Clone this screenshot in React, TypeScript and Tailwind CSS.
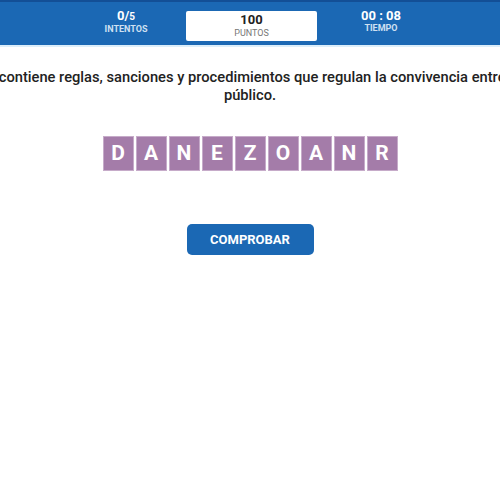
const letters = ['D', 'A', 'N', 'E', 'Z', 'O', 'A', 'N', 'R'];

function Stat({ value, label, className = '' }: { value: React.ReactNode; label: string; className?: string }) {
  return (
    <div className={`flex flex-col items-center pt-[6px] ${className}`}>
      <span className="text-[13px] font-bold leading-[15px] text-white">{value}</span>
      <span className="text-[9px] font-bold leading-[11px] text-[#cfe0f2]">{label}</span>
    </div>
  );
}

export default function App() {
  return (
    <div className="min-h-[500px] w-[500px] overflow-hidden bg-white" style={{ fontFamily: 'Roboto, "DejaVu Sans", sans-serif' }}>
      <header className="h-[47px] border-t-2 border-b-2 border-t-[#134f96] border-b-[#dceefa] bg-[#1b68b4]">
        <div className="flex pl-[66px]">
          <Stat className="w-[120px]" value={<>0/<span className="text-[10px]">5</span></>} label="INTENTOS" />
          <div className="mt-[9px] flex h-[30px] w-[131px] flex-col items-center rounded-[2px] bg-white pt-[1px]">
            <span className="text-[13px] font-bold leading-[15px] text-[#222]">100</span>
            <span className="text-[9px] leading-[12px] text-[#777]">PUNTOS</span>
          </div>
          <Stat className="w-[128px]" value="00 : 08" label="TIEMPO" />
        </div>
      </header>

      <div className="mt-[21px] flex flex-col items-center text-[14.7px] font-medium leading-[18px] text-[#222]">
        <p className="shrink-0 whitespace-nowrap text-center">
          La contiene reglas, sanciones y procedimientos que regulan la convivencia entre el
        </p>
        <p className="text-center">público.</p>
      </div>

      <div className="mt-[32px] flex justify-center gap-[2px]">
        {letters.map((l, i) => (
          <div key={i} className="flex h-[35px] w-[31px] items-center justify-center border border-[#c6abc9] bg-[#a47ca9] text-[21px] font-bold text-white">
            {l}
          </div>
        ))}
      </div>

      <div className="mt-[53px] flex justify-center">
        <button className="h-[31px] w-[127px] rounded-[5px] bg-[#1b68b4] text-[13px] font-bold text-white">COMPROBAR</button>
      </div>
    </div>
  );
}
